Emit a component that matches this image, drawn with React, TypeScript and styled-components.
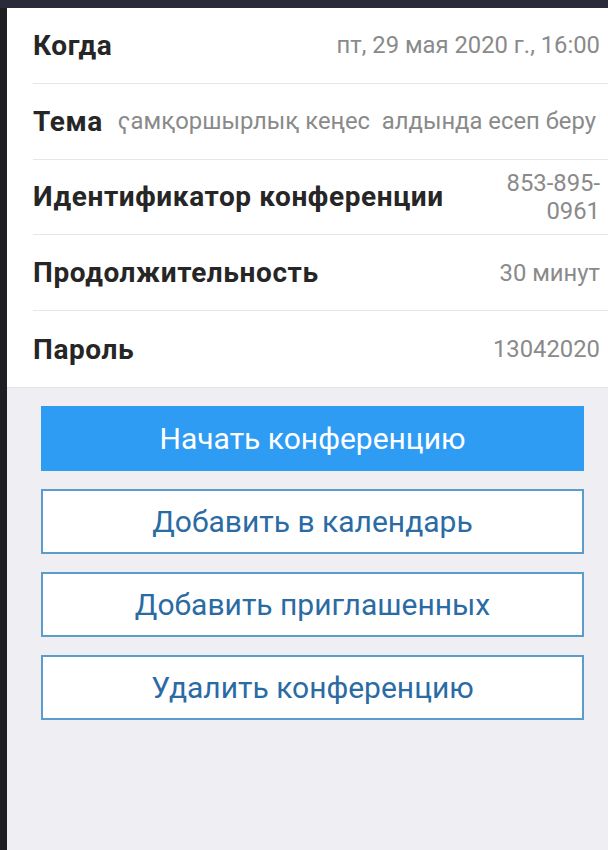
import styled, { createGlobalStyle } from 'styled-components'

const GlobalStyle = createGlobalStyle`
  html, body {
    margin: 0;
    padding: 0;
    background: #1e1e22;
  }
  * { box-sizing: border-box; }
`

const Screen = styled.div`
  width: 608px;
  height: 850px;
  display: flex;
  flex-direction: column;
  padding: 8px 0 0 7px;
  background: #1f1f22;
  font-family: Roboto, 'Noto Sans', sans-serif;
  overflow: hidden;
  position: relative;

  &::before {
    content: '';
    position: absolute;
    top: 0;
    left: 0;
    right: 0;
    height: 8px;
    background: #2b2a3a;
  }
`

const Body = styled.div`
  flex: 1;
  background: #eeeef3;
  display: flex;
  flex-direction: column;
`

const InfoCard = styled.div`
  background: #ffffff;
  padding-left: 26px;
  border-bottom: 1px solid #e3e3e6;
`

const Row = styled.div`
  display: flex;
  align-items: center;
  justify-content: space-between;
  gap: 15px;
  height: 75.8px;
  padding-right: 8px;
  border-bottom: 1px solid #e6e6e8;

  &:last-child {
    border-bottom: 0;
  }
`

const Label = styled.div`
  font-size: 28px;
  font-weight: 700;
  letter-spacing: 0.6px;
  color: #262626;
  white-space: nowrap;
`

const Value = styled.div<{ $left?: boolean }>`
  font-size: 23.8px;
  color: #8a8a8a;
  text-align: right;
  line-height: 28px;
  flex: ${p => (p.$left ? '1' : '0 1 auto')};
  ${p => p.$left && 'text-align: left; white-space: pre; overflow: hidden;'}
`

const Actions = styled.div`
  display: flex;
  flex-direction: column;
  gap: 18px;
  padding: 18px 24px 0 34px;
`

const ActionButton = styled.button<{ $primary?: boolean }>`
  height: 65px;
  width: 100%;
  font-family: Roboto, 'Noto Sans', sans-serif;
  font-size: 30px;
  cursor: pointer;
  border: 2px solid ${p => (p.$primary ? '#2f9cf4' : '#5a9ccb')};
  background: ${p => (p.$primary ? '#2f9cf4' : '#ffffff')};
  color: ${p => (p.$primary ? '#ffffff' : '#2b6ba4')};
`

const rows = [
  { label: 'Когда', value: 'пт, 29 мая 2020 г., 16:00' },
  { label: 'Тема', value: 'ҁамқоршырлық кеңес  алдында есеп беру', left: true },
  { label: 'Идентификатор конференции', value: <>853-895-<br />0961</> },
  { label: 'Продолжительность', value: '30 минут' },
  { label: 'Пароль', value: '13042020' },
]

const actions = [
  { text: 'Начать конференцию', primary: true },
  { text: 'Добавить в календарь' },
  { text: 'Добавить приглашенных' },
  { text: 'Удалить конференцию' },
]

export default function App() {
  return (
    <>
      <GlobalStyle />
      <Screen>
        <Body>
          <InfoCard>
            {rows.map(r => (
              <Row key={r.label}>
                <Label>{r.label}</Label>
                <Value $left={r.left}>{r.value}</Value>
              </Row>
            ))}
          </InfoCard>
          <Actions>
            {actions.map(a => (
              <ActionButton key={a.text} $primary={a.primary}>
                {a.text}
              </ActionButton>
            ))}
          </Actions>
        </Body>
      </Screen>
    </>
  )
}
